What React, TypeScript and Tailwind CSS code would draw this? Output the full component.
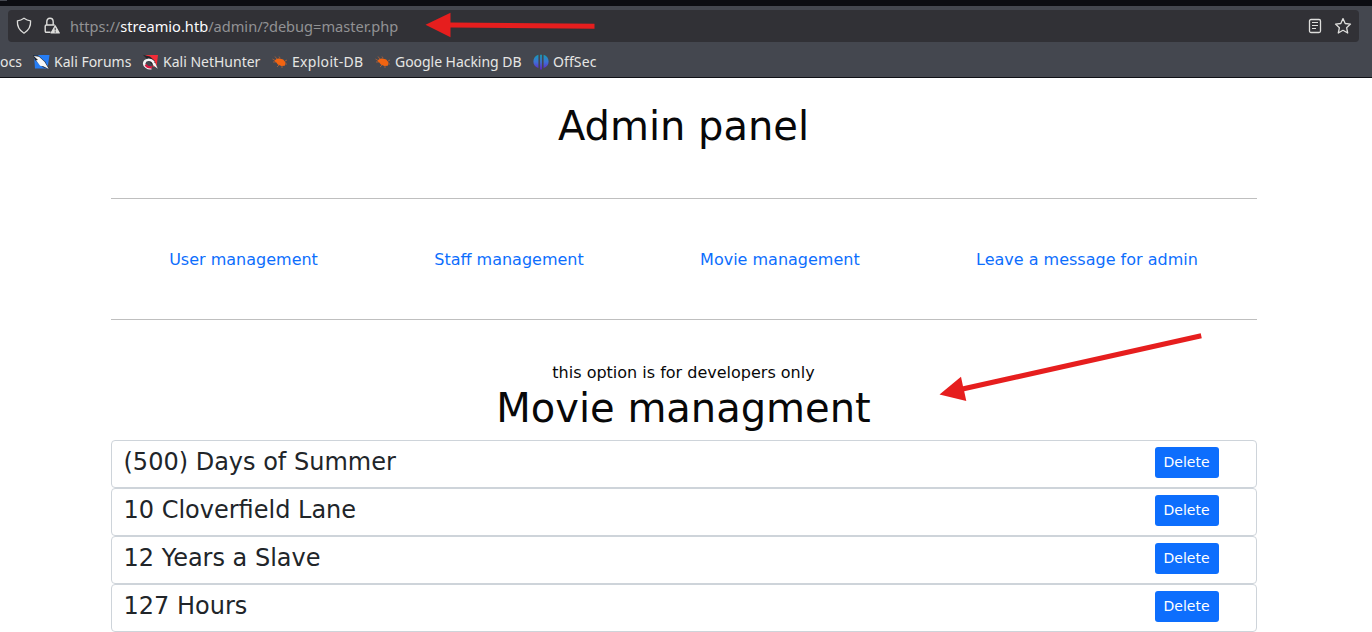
import type { ReactNode } from "react";

const movies = ["(500) Days of Summer", "10 Cloverfield Lane", "12 Years a Slave", "127 Hours"];
const links = ["User management", "Staff management", "Movie management", "Leave a message for admin"];

function ShieldIcon() {
  return (
    <svg width="16" height="18" viewBox="0 0 16 18" fill="none" stroke="#dededc" strokeWidth="1.3" strokeLinejoin="round">
      <path d="M8 1.2 Q11 3.4 14.6 3.8C14.9 8.5 13.4 13.1 8 16.2 2.6 13.1 1.1 8.5 1.4 3.8Q5 3.4 8 1.2Z" />
    </svg>
  );
}

function LockWarningIcon() {
  return (
    <svg width="16" height="18" viewBox="0 0 16 18" fill="none">
      <path d="M6.5 15.3H2.4Q1.2 15.3 1.2 14V9.2Q1.2 8 2.4 8H9.5Q10.7 8 10.7 8.6M2.8 8V5Q2.8 1.3 6 1.3T9.2 5V8" stroke="#dededc" strokeWidth="1.4" />
      <path d="M11.2 8.8 15.3 16H7.1Z" fill="#dededc" stroke="#dededc" strokeWidth="1.2" strokeLinejoin="round" />
      <path d="M11.2 10.8v2.6M11.2 14.3v1.2" stroke="#313136" strokeWidth="1" />
    </svg>
  );
}

function ReaderIcon() {
  return (
    <svg width="14" height="16" viewBox="0 0 14 16" fill="none" stroke="#dededc" strokeWidth="1.3">
      <rect x="1.5" y="1.5" width="11" height="13" rx="1.5" />
      <path d="M4 4.5h6M4 7.5h6M4 10.5h4" strokeWidth="1.2" />
    </svg>
  );
}

function StarIcon() {
  return (
    <svg width="18" height="18" viewBox="0 0 18 18" fill="none" stroke="#dededc" strokeWidth="1.3" strokeLinejoin="round">
      <path d="M9 1.6 11.2 6.5 16.5 7.1 12.6 10.7 13.7 16 9 13.3 4.3 16 5.4 10.7 1.5 7.1 6.8 6.5Z" />
    </svg>
  );
}

function ForumsIcon() {
  return (
    <svg width="17" height="16" viewBox="0 0 17 16">
      <path d="M1 1H16.5L14.5 14.5H2Z" fill="#267df4" />
      <path d="M0 1.2 5 1.2 12 7.6 16.5 15.2 10 13.2 2 6Z" fill="#25272c" />
      <path d="M0.8 2 6 2.8 11.5 7.8 15.8 15 10.3 12.3 7.2 11.8 3 6.3 5 6Z" fill="#f5f7f8" />
    </svg>
  );
}

function NetHunterIcon() {
  return (
    <svg width="17" height="16" viewBox="0 0 17 16">
      <path d="M3 1H16L14.5 13H11L8 6Z" fill="#f32d38" />
      <path d="M0.8 0.8 8 2.5 12.5 6.5 15.5 14.5 10.5 11.5 5 5Z" fill="#26272c" />
      <path d="M9.3 14.2C6 15 1.8 12 2.2 9.2 2.8 5.2 8.5 4.6 11.8 8.4" fill="none" stroke="#f5f5f5" strokeWidth="2.5" />
      <path d="M3.6 10.6Q5.5 14 10 13.2" fill="none" stroke="#d81942" strokeWidth="2.2" />
      <path d="m9.8 6 3.7 3.4 2.3 5.3-4.8-3.5Z" fill="#f5f5f5" />
    </svg>
  );
}

function BugIcon() {
  return (
    <svg width="16" height="16" viewBox="0 0 16 16">
      <g stroke="#b56337" strokeWidth=".8" fill="none">
        <path d="M5 5 3 2.5M8 4 7 2.5M4 7 .5 5M4 8H1M7 11 5 13M10 12v2M13 7l2-1M13 10h2" />
      </g>
      <path d="M2.5 7C3.5 4.8 6 4 8.5 4.8L11.2 5.6 13.5 8.2 12.8 11.8 9.4 12 5.8 10.6 4.3 8.5Z" fill="#f26411" />
    </svg>
  );
}

function OffSecIcon() {
  return (
    <svg width="16" height="16" viewBox="0 0 16 16">
      <defs>
        <linearGradient id="offsec" x1="0" y1="0" x2="0" y2="1">
          <stop stopColor="#159db5" />
          <stop offset=".5" stopColor="#3e70d5" />
          <stop offset="1" stopColor="#6324c9" />
        </linearGradient>
      </defs>
      <path d="M5.4.8V14C2 13 .4 10.5.4 7.5S2.2 1.8 5.4.8ZM7.1.7H8.9V15.5H7.1ZM10.6.8C13.8 1.8 15.6 4.5 15.6 7.5S14 13 10.6 14Z" fill="url(#offsec)" />
    </svg>
  );
}

function Bookmark({ icon, label, className }: { icon: ReactNode; label: string; className: string }) {
  return (
    <div className={`flex shrink-0 items-center ${className}`}>
      {icon}
      <span className="pb-0.5 whitespace-nowrap">{label}</span>
    </div>
  );
}

export default function App() {
  return (
    <div className="relative h-[632px] w-[1372px] overflow-hidden bg-white font-['DejaVu_Sans',sans-serif] text-[#080809]">
      <header className="h-[78px] border-b border-[#101116] bg-[#44474f] font-['Noto_Sans',sans-serif] text-[14px] text-[#e6e6e4]">
        <div className="h-1.5 bg-[#0c0d12]">
          <div className="h-px w-[7px] bg-[#44474f]" />
        </div>
        <div className="mt-1 mr-[13px] ml-2 flex h-8 items-center rounded bg-[#313136] pl-2">
          <ShieldIcon />
          <div className="ml-3"><LockWarningIcon /></div>
          <span className="ml-2.5 pt-0.5 text-[14.6px] text-[#929294]">
            https://<span className="text-[#fbfbfe]">streamio.htb</span>/admin/?debug=master.php
          </span>
          <div className="mr-[7px] ml-auto flex items-center gap-3">
            <ReaderIcon />
            <StarIcon />
          </div>
        </div>
        <nav className="flex h-[35px] items-center pt-[5px]">
          <span className="w-[33px] pb-0.5">ocs</span>
          <Bookmark icon={<ForumsIcon />} label="Kali Forums" className="w-[109px] gap-1" />
          <Bookmark icon={<NetHunterIcon />} label="Kali NetHunter" className="w-[130px] gap-1" />
          <Bookmark icon={<BugIcon />} label="Exploit-DB" className="w-[103px] gap-1 tracking-[0.3px]" />
          <Bookmark icon={<BugIcon />} label="Google Hacking DB" className="w-[158px] gap-1 tracking-[-0.04px]" />
          <Bookmark icon={<OffSecIcon />} label="OffSec" className="gap-1 tracking-[0.1px]" />
        </nav>
      </header>
      <main className="ml-[111px] w-[1146px]">
        <h1 className="pt-6 pr-px text-center text-[40px] leading-[48px]">Admin panel</h1>
        <div className="mt-12 h-px bg-[#bfbfbf]" />
        <nav className="flex h-[120px] items-center justify-around pt-0.5 pr-px text-base text-[#0d6efd]">
          {links.map((label) => (
            <a key={label} href="#">{label}</a>
          ))}
        </nav>
        <div className="h-px bg-[#bfbfbf]" />
        <p className="pt-[41px] pr-px text-center text-base leading-[23px]">this option is for developers only</p>
        <h1 className="pr-px text-center text-[40px] leading-[48px]">Movie managment</h1>
        <ul className="mt-2">
          {movies.map((title) => (
            <li key={title} className="flex h-12 justify-between rounded border border-[#ced4da] pr-[37px] pl-[11.5px] text-[#212529]">
              <span className="pt-[7px] text-2xl leading-[29px]">{title}</span>
              <button className="mt-1.5 h-[31px] w-16 rounded-[3px] bg-[#0d6efd] pr-px pb-0.5 text-sm text-white">Delete</button>
            </li>
          ))}
        </ul>
      </main>
      <svg className="pointer-events-none absolute inset-0" width="1372" height="632" fill="#e61e1e">
        <path d="M425.5 24.7 450.5 12.8V22.5L594.5 23.8V28.8L450.5 27.5V37.2Z" />
        <path d="M939.5 394.5 961 376.8 963 386.2 1200.7 333.3 1201.8 338.3 964.2 391.2 966.3 401Z" />
      </svg>
    </div>
  );
}
